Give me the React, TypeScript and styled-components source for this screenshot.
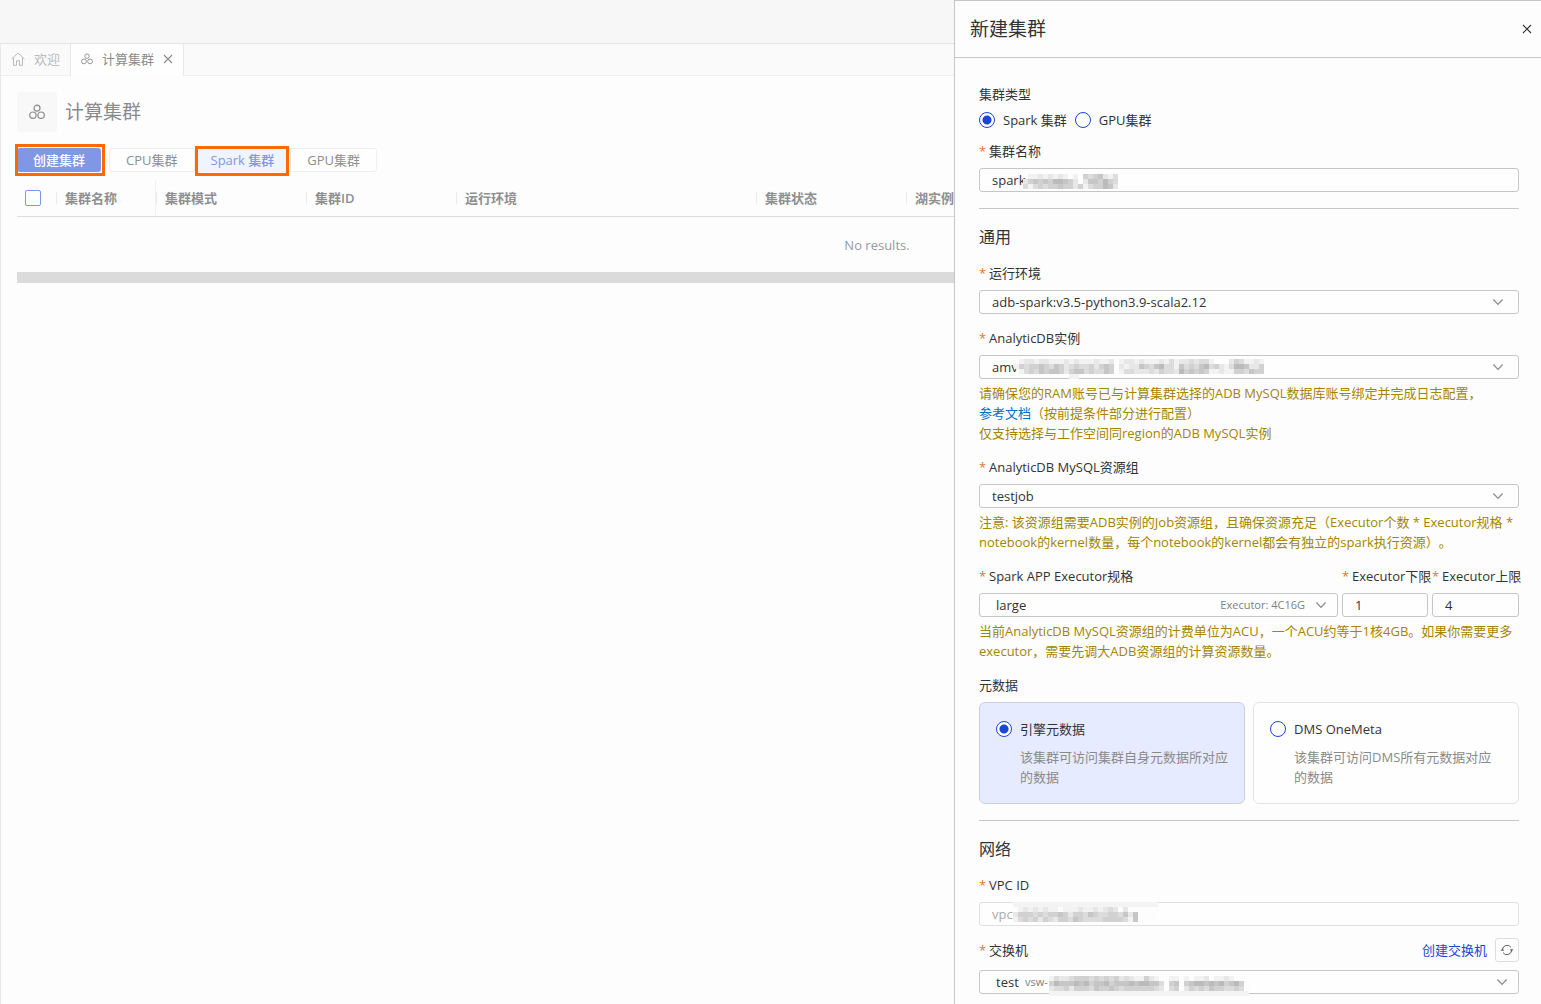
import React, { useId, useState } from "react";
import styled, { createGlobalStyle, css } from "styled-components";

const GlobalStyle = createGlobalStyle`
  *, *::before, *::after { box-sizing: border-box; }
  body {
    margin: 0;
    background: #fdfdfd;
    color: #333;
    font: 13px/20px "Open Sans", "Noto Sans CJK SC", sans-serif;
    text-spacing-trim: space-all;
  }
  button, input, select { font: inherit; color: inherit; }
`;

/* ---------- icons ---------- */

const HomeIcon = () => (
  <svg width="14" height="14" viewBox="0 0 14 14" fill="none" stroke="currentColor" strokeWidth="1">
    <path d="M0.6 7 7 1l6.4 6M2.5 5.4v7.9h3V8.8h3v4.5h3V5.4" />
  </svg>
);

const ClusterIcon = ({ size }: { size: number }) => (
  <svg width={size} height={size} viewBox="0 0 16 16" fill="none" stroke="currentColor" strokeWidth="1.2">
    <circle cx="8" cy="4.2" r="3" />
    <circle cx="3.9" cy="11.2" r="3.2" />
    <circle cx="12.1" cy="11.2" r="3.2" />
  </svg>
);

const CrossIcon = ({ size }: { size: number }) => (
  <svg width={size} height={size} viewBox="0 0 10 10" fill="none" stroke="currentColor" strokeWidth="1.1">
    <path d="M1 1l8 8M9 1l-8 8" />
  </svg>
);

const RefreshIcon = () => (
  <svg width="14" height="14" viewBox="0 0 14 14" fill="none" stroke="currentColor" strokeWidth="1">
    <path d="M2.4 6.6a4.7 4.7 0 0 1 8.6-2.2M11.6 7.4a4.7 4.7 0 0 1-8.6 2.2" />
    <path d="M2.4 5.2v2.2M0.8 7.2h3.2M11.6 8.8V6.6M10 6.8h3.2" />
  </svg>
);

/* ---------- workspace ---------- */

const Page = styled.div`
  display: grid;
  grid-template-columns: minmax(0, 1fr) 587px;
  min-height: 100vh;
`;

const Workspace = styled.main`
  display: flex;
  flex-direction: column;
  min-width: 0;
  overflow: hidden;
`;

const TopBar = styled.header`
  height: 44px;
  background: #f7f7f7;
  border-bottom: 1px solid #e5e5e5;
`;

const Frame = styled.div`
  flex: 1;
  border-left: 1px solid #e9e9e9;
`;

const TabBar = styled.nav`
  display: flex;
  height: 32px;
  background: #fafafa;
  box-shadow: inset 0 -1px #efefef;
`;

const Tab = styled.div<{ $active?: boolean }>`
  display: flex;
  align-items: center;
  gap: 9px;
  padding: 0 10px;
  border-right: 1px solid #e9e9e9;
  color: ${(p) => (p.$active ? "#8c8c8c" : "#bbb")};
  background: ${(p) => (p.$active ? "#fefefe" : "transparent")};
  line-height: 18px;
  padding-bottom: 2px;
`;

const IconButton = styled.button`
  display: flex;
  align-items: center;
  justify-content: center;
  padding: 0;
  border: 0;
  background: none;
  cursor: pointer;
`;

const Content = styled.section`
  padding: 16px 0 0 16px;
`;

const Heading = styled.div`
  display: flex;
  align-items: center;
  gap: 8px;
  color: #8a8a8a;
`;

const HeadingIcon = styled.span`
  display: flex;
  align-items: center;
  justify-content: center;
  width: 40px;
  height: 40px;
  border-radius: 3px;
  background: #f8f8f8;
`;

const HeadingTitle = styled.h1`
  margin: 0;
  font-size: 19px;
  line-height: 28px;
  font-weight: 400;
`;

const Toolbar = styled.div`
  display: flex;
  gap: 8px;
  padding: 16px 0 8px;
`;

const highlight = css`
  position: relative;
  &::after {
    content: "";
    position: absolute;
    border: 3px solid #ff6a00;
    pointer-events: none;
  }
`;

const CreateButton = styled.button`
  ${highlight}
  width: 84px;
  height: 24px;
  padding: 0;
  border: 0;
  border-radius: 3px;
  background: #7f97e5;
  color: #fff;
  font-weight: 500;
  &::after { inset: -4px -4px -4px -2px; }
`;

const Segments = styled.div`
  display: flex;
  height: 24px;
`;

const Segment = styled.button<{ $active?: boolean }>`
  padding: 0 16px;
  margin-left: -1px;
  border: 1px solid #efefef;
  background: #fefefe;
  color: #8f8f8f;
  line-height: 20px;
  white-space: nowrap;
  &:first-child { margin-left: 0; border-radius: 3px 0 0 3px; }
  &:last-child { border-radius: 0 3px 3px 0; }
  ${(p) =>
    p.$active &&
    css`
      ${highlight}
      background: #f0f4ff;
      color: #7f97e5;
      font-weight: 500;
      &::after { inset: -3px 1px -5px 0; }
    `}
`;

const Table = styled.table`
  width: 1720px;
  table-layout: fixed;
  border-collapse: separate;
  border-spacing: 0;
`;

const HeadCell = styled.th<{ $pinned?: boolean; $first?: boolean }>`
  height: 37px;
  padding: 0 0 0 ${(p) => (p.$first ? 8 : 9)}px;
  border-bottom: 1px solid #dedede;
  color: #8f8f8f;
  font-weight: 600;
  text-align: left;
  white-space: nowrap;
  background: ${(p) =>
    p.$first
      ? "none"
      : "linear-gradient(#ebebeb, #ebebeb) left center / 1px 12px no-repeat"};
  box-shadow: ${(p) => (p.$pinned ? "inset -1px 0 #f0f0f0" : "none")};
`;

const EmptyCell = styled.td`
  height: 55px;
  padding: 0;
  color: #999;
  text-align: center;
`;

const Check = styled.input`
  appearance: none;
  display: block;
  width: 16px;
  height: 16px;
  margin: 0;
  border: 1px solid #7f97e5;
  border-radius: 2px;
  background: #fff;
  &:checked { background: #7f97e5; }
`;

const ScrollTrack = styled.div`
  height: 11px;
  background: #dbdbdb;
`;

/* ---------- drawer ---------- */

const Drawer = styled.aside`
  border: 1px solid #c6c6c6;
  border-width: 1px 0 0 1px;
  background: #fdfdfd;
`;

const DrawerHeader = styled.header`
  display: flex;
  align-items: center;
  justify-content: space-between;
  height: 57px;
  padding: 0 9px 0 15px;
  border-bottom: 1px solid #c6c6c6;
`;

const DrawerTitle = styled.h2`
  margin: 0;
  font-size: 19px;
  line-height: 28px;
  font-weight: 400;
`;

const DrawerBody = styled.form`
  padding: 26px 22px 10px 24px;
`;

const Section = styled.section<{ $gap: number; $divided?: boolean }>`
  display: flex;
  flex-direction: column;
  gap: ${(p) => p.$gap}px;
  padding-bottom: 16px;
  border-bottom: ${(p) => (p.$divided ? "1px solid #c6c6c6" : "0")};
  & + & { padding-top: 16px; }
`;

const SectionTitle = styled.h3`
  margin: 0;
  font-size: 16px;
  line-height: 24px;
  font-weight: 400;
`;

const FieldBox = styled.div`
  display: flex;
  flex-direction: column;
  gap: 7px;
  min-width: 0;
`;

const Label = styled.label<{ $required?: boolean }>`
  white-space: nowrap;
  ${(p) =>
    p.$required &&
    css`
      &::before {
        content: "*";
        display: inline-block;
        width: 10px;
        color: #e8762c;
      }
    `}
`;

const Help = styled.p`
  margin: -3px 0 0;
  color: #a38500;
`;

const Link = styled.a<{ $strong?: boolean }>`
  color: ${(p) => (p.$strong ? "#1a45d6" : "#0070cc")};
  text-decoration: none;
`;

const Control = styled.div`
  position: relative;
  display: flex;
`;

const boxStyle = css<{ $muted?: boolean; $indent?: number }>`
  width: 100%;
  height: 24px;
  padding: 0 12px;
  padding-left: ${(p) => p.$indent ?? 12}px;
  border: 1px solid ${(p) => (p.$muted ? "#e0e0e0" : "#c6c6c6")};
  border-radius: 3px;
  background: #fefefe;
  color: ${(p) => (p.$muted ? "#aaa" : "#333")};
  outline: none;
`;

const TextInput = styled.input<{ $muted?: boolean; $indent?: number }>`
  ${boxStyle}
`;

const SelectBox = styled.select<{ $muted?: boolean; $indent?: number; $strong?: boolean }>`
  ${boxStyle}
  appearance: none;
  font-weight: ${(p) => (p.$strong ? 500 : 400)};
`;

const Chevron = styled.svg<{ $right: number }>`
  position: absolute;
  top: 6px;
  right: ${(p) => p.$right}px;
  color: #8a8a8a;
  pointer-events: none;
`;

const Note = styled.span<{ $left?: number; $right?: number }>`
  position: absolute;
  top: 2px;
  left: ${(p) => (p.$left === undefined ? "auto" : `${p.$left}px`)};
  right: ${(p) => (p.$right === undefined ? "auto" : `${p.$right}px`)};
  color: #808080;
  font-size: 11px;
  font-weight: 500;
  pointer-events: none;
`;

const MaskBox = styled.svg<{ $left: number; $top: number }>`
  position: absolute;
  left: ${(p) => p.$left}px;
  top: ${(p) => p.$top}px;
  pointer-events: none;
`;

const Columns = styled.div`
  display: grid;
  grid-template-columns: minmax(0, 1fr) 86px 87px;
  gap: 4px;
`;

const LabelRow = styled.div`
  display: flex;
  align-items: center;
  gap: 8px;
  margin: -2px 0 1px;
  ${Label} { flex: 1; }
`;

const RefreshButton = styled(IconButton)`
  width: 24px;
  height: 24px;
  border: 1px solid #dedede;
  border-radius: 3px;
  color: #666;
`;

const RadioRow = styled.div`
  display: flex;
  gap: 8px;
  height: 18px;
`;

const RadioLabel = styled.label`
  display: flex;
  align-items: center;
  gap: 8px;
`;

const Radio = styled.input`
  appearance: none;
  flex: none;
  width: 16px;
  height: 16px;
  margin: 0;
  border: 1px solid #1a45d6;
  border-radius: 50%;
  background: #fff;
  &:checked {
    background: radial-gradient(circle, #1a45d6 0 4px, #fff 5px);
  }
`;

const Cards = styled.div`
  display: grid;
  grid-template-columns: 1fr 1fr;
  gap: 8px;
`;

const Card = styled.label<{ $selected: boolean }>`
  display: grid;
  grid-template-columns: 16px minmax(0, 1fr);
  align-items: center;
  gap: 8px;
  padding: 16px;
  border: 1px solid ${(p) => (p.$selected ? "#c9d0e6" : "#e3e3e3")};
  border-radius: 6px;
  background: ${(p) => (p.$selected ? "#e6ebff" : "#fefefe")};
`;

const CardText = styled.span`
  grid-column: 2;
  color: #8a8a8a;
`;

/* Mosaic that hides the private part of a value: one digit per cell, 0 is clear. */
function Mask({ left, top, rows, strip }: { left: number; top: number; rows: string[]; strip?: number }) {
  const cell = 5;
  const width = rows[0].length * cell;
  const height = rows.length * cell;
  return (
    <MaskBox $left={left} $top={top} width={width} height={height} shapeRendering="crispEdges" aria-hidden="true">
      <rect width={width} height={height} fill="#fdfdfd" fillOpacity={strip === undefined ? 0 : 1} />
      {strip !== undefined && <rect y={strip * cell} width={width} height={cell} fill="#f4f4f4" />}
      {rows.flatMap((row, y) =>
        [...row].map((c, x) => {
          const v = 253 - Number(c) * 11;
          return c === "0" ? null : (
            <rect key={`${x}-${y}`} x={x * cell} y={y * cell} width={cell} height={cell} fill={`rgb(${v},${v},${v})`} />
          );
        })
      )}
    </MaskBox>
  );
}

interface FieldProps {
  label: string;
  help?: React.ReactNode;
  children: (id: string) => React.ReactNode;
}

function Field({ label, help, children }: FieldProps) {
  const id = useId();
  return (
    <FieldBox>
      <Label htmlFor={id} $required>{label}</Label>
      <Control>{children(id)}</Control>
      {help && <Help>{help}</Help>}
    </FieldBox>
  );
}

interface PickerProps {
  id: string;
  value: string;
  indent?: number;
  arrow?: number;
  strong?: boolean;
}

function Picker({ id, value, indent, arrow = 15, strong }: PickerProps) {
  return (
    <>
      <SelectBox id={id} $indent={indent} $strong={strong}>
        <option>{value}</option>
      </SelectBox>
      <Chevron $right={arrow} width="12" height="12" viewBox="0 0 12 12" fill="none" stroke="currentColor" strokeWidth="1.2">
        <path d="M1.4 3.5 6 8.3l4.6-4.8" />
      </Chevron>
    </>
  );
}

const NAME_MASK = [
  "0112121210104345213",
  "2454546654202554643",
  "3134344544241344652",
];
const INSTANCE_MASK = [
  "01221221112121112112012212111213122323310002431121",
  "14344543542343342454021225435633153435634213665224",
  "01343545542455343354013322232433264545411211443544",
  "00000000000110000000000000000000000000000000000000",
];
const VPC_MASK = [
  "00000000000000000000000000000",
  "01212121101112112123202000000",
  "24443434454244354334435250000",
  "13434243244354333344443150000",
];
const SWITCH_MASK = [
  "1322344434343423211421001101011201121000",
  "4655565645564555656655304504566565645640",
  "2334244435445434444443203402434354433430",
  "0000000000000000000000000000000000000000",
];

const COLUMNS = ["集群名称", "集群模式", "集群ID", "运行环境", "集群状态", "湖实例"];
const COLUMN_WIDTHS = [39, 100, 150, 150, 300, 150, 831];

function ClusterPage() {
  return (
    <Workspace>
      <TopBar />
      <Frame>
        <TabBar>
          <Tab><HomeIcon />欢迎</Tab>
          <Tab $active>
            <ClusterIcon size={12} />计算集群
            <IconButton type="button" aria-label="关闭标签"><CrossIcon size={10} /></IconButton>
          </Tab>
        </TabBar>
        <Content>
          <Heading>
            <HeadingIcon><ClusterIcon size={16} /></HeadingIcon>
            <HeadingTitle>计算集群</HeadingTitle>
          </Heading>
          <Toolbar>
            <CreateButton type="button">创建集群</CreateButton>
            <Segments>
              <Segment type="button">CPU集群</Segment>
              <Segment type="button" $active>Spark 集群</Segment>
              <Segment type="button">GPU集群</Segment>
            </Segments>
          </Toolbar>
          <Table>
            <colgroup>
              {COLUMN_WIDTHS.map((width, i) => <col key={i} style={{ width }} />)}
            </colgroup>
            <thead>
              <tr>
                <HeadCell $first><Check type="checkbox" aria-label="全选" /></HeadCell>
                {COLUMNS.map((name, i) => <HeadCell key={name} $pinned={i === 0}>{name}</HeadCell>)}
              </tr>
            </thead>
            <tbody>
              <tr><EmptyCell colSpan={7}>No results.</EmptyCell></tr>
            </tbody>
          </Table>
          <ScrollTrack />
        </Content>
      </Frame>
    </Workspace>
  );
}

export default function App() {
  const [kind, setKind] = useState("spark");
  const [meta, setMeta] = useState("engine");
  return (
    <>
      <GlobalStyle />
      <Page>
        <ClusterPage />
        <Drawer>
          <DrawerHeader>
            <DrawerTitle>新建集群</DrawerTitle>
            <IconButton type="button" aria-label="关闭"><CrossIcon size={10} /></IconButton>
          </DrawerHeader>
          <DrawerBody>
            <Section $gap={12} $divided>
              <FieldBox>
                <Label as="span">集群类型</Label>
                <RadioRow>
                  <RadioLabel>
                    <Radio type="radio" name="kind" checked={kind === "spark"} onChange={() => setKind("spark")} />
                    Spark 集群
                  </RadioLabel>
                  <RadioLabel>
                    <Radio type="radio" name="kind" checked={kind === "gpu"} onChange={() => setKind("gpu")} />
                    GPU集群
                  </RadioLabel>
                </RadioRow>
              </FieldBox>
              <Field label="集群名称">
                {(id) => (
                  <>
                    <TextInput id={id} defaultValue="spark" />
                    <Mask left={44} top={6} rows={NAME_MASK} />
                  </>
                )}
              </Field>
            </Section>

            <Section $gap={14} $divided>
              <SectionTitle>通用</SectionTitle>
              <Field label="运行环境">
                {(id) => <Picker id={id} value="adb-spark:v3.5-python3.9-scala2.12" />}
              </Field>
              <Field
                label="AnalyticDB实例"
                help={
                  <>
                    请确保您的RAM账号已与计算集群选择的ADB MySQL数据库账号绑定并完成日志配置，
                    <br />
                    <Link href="#doc">参考文档</Link>（按前提条件部分进行配置）
                    <br />
                    仅支持选择与工作空间同region的ADB MySQL实例
                  </>
                }
              >
                {(id) => (
                  <>
                    <Picker id={id} value="amv" />
                    <Mask left={35} top={4} rows={INSTANCE_MASK} />
                  </>
                )}
              </Field>
              <Field
                label="AnalyticDB MySQL资源组"
                help={
                  <>
                    注意: 该资源组需要ADB实例的Job资源组，且确保资源充足（Executor个数 * Executor规格 *
                    <br />
                    notebook的kernel数量，每个notebook的kernel都会有独立的spark执行资源）。
                  </>
                }
              >
                {(id) => <Picker id={id} value="testjob" />}
              </Field>
              <FieldBox>
                <Columns>
                  <Field label="Spark APP Executor规格">
                    {(id) => (
                      <>
                        <Picker id={id} value="large" indent={16} arrow={11} strong />
                        <Note $right={33}>Executor: 4C16G</Note>
                      </>
                    )}
                  </Field>
                  <Field label="Executor下限">{(id) => <TextInput id={id} defaultValue="1" />}</Field>
                  <Field label="Executor上限">{(id) => <TextInput id={id} defaultValue="4" />}</Field>
                </Columns>
                <Help>
                  当前AnalyticDB MySQL资源组的计费单位为ACU，一个ACU约等于1核4GB。如果你需要更多
                  <br />
                  executor，需要先调大ADB资源组的计算资源数量。
                </Help>
              </FieldBox>
              <FieldBox>
                <span>元数据</span>
                <Cards>
                  <Card $selected={meta === "engine"}>
                    <Radio type="radio" name="meta" checked={meta === "engine"} onChange={() => setMeta("engine")} />
                    <span>引擎元数据</span>
                    <CardText>该集群可访问集群自身元数据所对应的数据</CardText>
                  </Card>
                  <Card $selected={meta === "dms"}>
                    <Radio type="radio" name="meta" checked={meta === "dms"} onChange={() => setMeta("dms")} />
                    <span>DMS OneMeta</span>
                    <CardText>该集群可访问DMS所有元数据对应的数据</CardText>
                  </Card>
                </Cards>
              </FieldBox>
            </Section>

            <Section $gap={14}>
              <SectionTitle>网络</SectionTitle>
              <Field label="VPC ID">
                {(id) => (
                  <>
                    <TextInput id={id} defaultValue="vpc" $muted readOnly />
                    <Mask left={34} top={0} rows={VPC_MASK} strip={0} />
                  </>
                )}
              </Field>
              <FieldBox>
                <LabelRow>
                  <Label htmlFor="vswitch" $required>交换机</Label>
                  <Link href="#create" $strong>创建交换机</Link>
                  <RefreshButton type="button" aria-label="刷新"><RefreshIcon /></RefreshButton>
                </LabelRow>
                <Control>
                  <Picker id="vswitch" value="test" indent={16} arrow={11} strong />
                  <Note $left={46}>vsw-</Note>
                  <Mask left={70} top={6} rows={SWITCH_MASK} strip={3} />
                </Control>
              </FieldBox>
            </Section>
          </DrawerBody>
        </Drawer>
      </Page>
    </>
  );
}
